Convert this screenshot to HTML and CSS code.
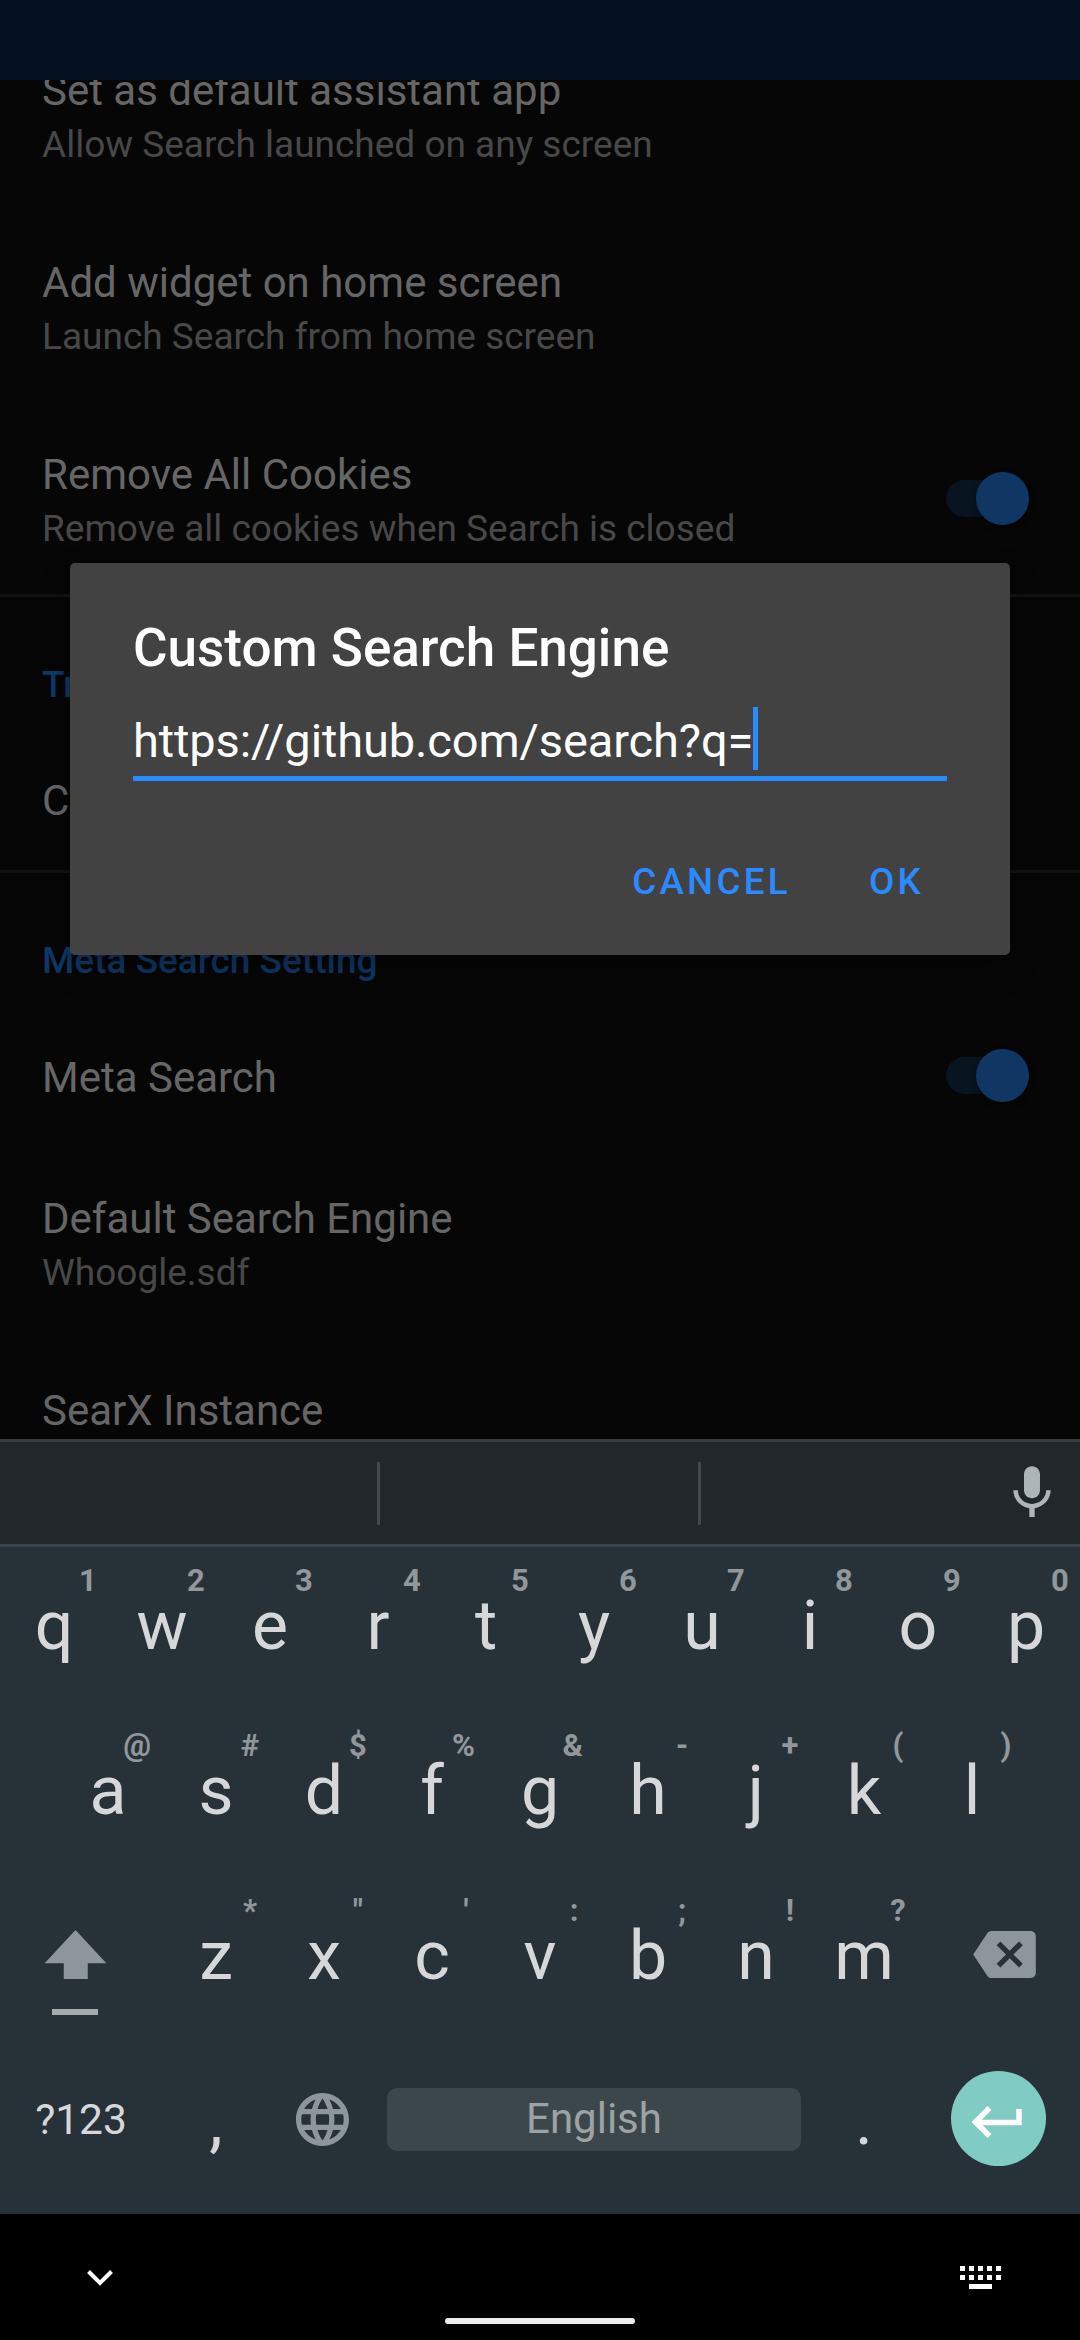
FILE: index.html
```
<!DOCTYPE html>
<html lang="en">
<head>
<meta charset="utf-8">
<title>Settings</title>
<link rel="stylesheet" href="styles.css">
</head>
<body>
<div class="screen">
  <header class="status-bar"></header>
  <main class="settings">
    <section class="group first">
      <div class="row"><div class="label"><div class="title">Set as default assistant app</div><div class="summary">Allow Search launched on any screen</div></div></div>
      <div class="row"><div class="label"><div class="title">Add widget on home screen</div><div class="summary">Launch Search from home screen</div></div></div>
      <div class="row"><div class="label"><div class="title">Remove All Cookies</div><div class="summary">Remove all cookies when Search is closed</div></div><div class="switch"><span class="thumb"></span></div></div>
    </section>
    <section class="group">
      <h2 class="category">Tr</h2>
      <div class="row single"><div class="label"><div class="title">C</div></div></div>
    </section>
    <section class="group">
      <h2 class="category">Meta Search Setting</h2>
      <div class="row single meta"><div class="label"><div class="title">Meta Search</div></div><div class="switch"><span class="thumb"></span></div></div>
      <div class="row"><div class="label"><div class="title">Default Search Engine</div><div class="summary">Whoogle.sdf</div></div></div>
      <div class="row"><div class="label"><div class="title">SearX Instance</div><div class="summary">&nbsp;</div></div></div>
    </section>
  </main>

  <section class="keyboard">
    <div class="suggestions">
      <span class="slot slot-a"></span><span class="slot slot-b"></span>
      <svg class="mic" viewBox="0 0 24 24"><path d="M12 14c1.66 0 2.99-1.34 2.99-3L15 5c0-1.66-1.34-3-3-3S9 3.34 9 5v6c0 1.66 1.34 3 3 3zm5.3-3c0 3-2.54 5.1-5.3 5.1S6.7 14 6.7 11H5c0 3.41 2.72 6.23 6 6.72V21h2v-3.28c3.28-.48 6-3.3 6-6.72h-1.7z"/></svg>
    </div>
    <div class="keys">
      <div class="key">q<span class="hint">1</span></div><div class="key">w<span class="hint">2</span></div><div class="key">e<span class="hint">3</span></div><div class="key">r<span class="hint">4</span></div><div class="key">t<span class="hint">5</span></div><div class="key">y<span class="hint">6</span></div><div class="key">u<span class="hint">7</span></div><div class="key">i<span class="hint">8</span></div><div class="key">o<span class="hint">9</span></div><div class="key">p<span class="hint">0</span></div>
    </div>
    <div class="keys">
      <div class="key">a<span class="hint">@</span></div><div class="key">s<span class="hint">#</span></div><div class="key">d<span class="hint">$</span></div><div class="key">f<span class="hint">%</span></div><div class="key">g<span class="hint">&amp;</span></div><div class="key">h<span class="hint">-</span></div><div class="key">j<span class="hint">+</span></div><div class="key">k<span class="hint">(</span></div><div class="key">l<span class="hint">)</span></div>
    </div>
    <div class="keys">
      <div class="key wide shift">
        <svg class="shift-arrow" viewBox="0 0 63 50"><path d="M31.500 0L63 34H44V50H19.500V34H0z"/></svg>
        <span class="shift-line"></span>
      </div>
      <div class="key">z<span class="hint">*</span></div><div class="key">x<span class="hint">"</span></div><div class="key">c<span class="hint">'</span></div><div class="key">v<span class="hint">:</span></div><div class="key">b<span class="hint">;</span></div><div class="key">n<span class="hint">!</span></div><div class="key">m<span class="hint">?</span></div>
      <div class="key wide delete">
        <svg class="backspace" viewBox="0 3 24 18"><path d="M22 3H7c-.69 0-1.23.35-1.59.88L0 12l5.410 8.110c.36.53.9.89 1.590.89h15c1.100 0 2-.9 2-2V5c0-1.100-.9-2-2-2zm-3 12.590L17.590 17 14 13.410 10.410 17 9 15.590 12.590 12 9 8.410 10.410 7 14 10.590 17.590 7 19 8.410 15.410 12 19 15.590z"/></svg>
      </div>
    </div>
    <div class="keys last">
      <div class="key wide symbols">?123</div>
      <div class="key comma">,</div>
      <div class="key globe-key"><svg class="globe" viewBox="2 2 20 20"><path d="M11.990 2C6.470 2 2 6.480 2 12s4.470 10 9.990 10C17.520 22 22 17.520 22 12S17.520 2 11.990 2zm6.930 6h-2.950c-.32-1.250-.78-2.450-1.380-3.560 1.840.63 3.370 1.910 4.330 3.560zM12 4.040c.83 1.200 1.480 2.530 1.910 3.960h-3.820c.43-1.430 1.080-2.760 1.910-3.960zM4.260 14C4.100 13.360 4 12.690 4 12s.1-1.360.26-2h3.380c-.08.66-.14 1.320-.14 2 0 .68.06 1.340.14 2H4.260zm.82 2h2.950c.32 1.250.78 2.450 1.380 3.560-1.840-.63-3.370-1.900-4.330-3.560zm2.950-8H5.080c.96-1.660 2.490-2.930 4.330-3.560C8.810 5.550 8.350 6.750 8.030 8zM12 19.960c-.83-1.200-1.480-2.530-1.910-3.960h3.820c-.43 1.430-1.080 2.760-1.910 3.960zM14.340 14H9.660c-.09-.66-.16-1.320-.16-2 0-.68.07-1.350.16-2h4.680c.09.65.16 1.320.16 2 0 .68-.07 1.340-.16 2zm.25 5.560c.6-1.110 1.060-2.310 1.380-3.560h2.950c-.96 1.650-2.490 2.930-4.330 3.560zM16.360 14c.08-.66.14-1.320.14-2 0-.68-.06-1.340-.14-2h3.380c.16.64.26 1.310.26 2s-.1 1.360-.26 2h-3.380z"/></svg></div>
      <div class="space">English</div>
      <div class="key period">.</div>
      <div class="key wide enter-key"><div class="enter"><svg class="enter-icon" viewBox="0 0 50 32"><path d="M47 3V16.500H4M17.500 2L3.500 16L17.500 30"/></svg></div></div>
    </div>
  </section>

  <footer class="nav-bar">
    <svg class="chevron" viewBox="0 0 26 16"><path d="M1.500 1.500L13 13L24.500 1.500"/></svg>
    <span class="home"></span>
    <svg class="ime" viewBox="0 0 41 23"><path d="M0 0h5v5H0zM9 0h5v5H9zM18 0h5v5H18zM27 0h5v5H27zM36 0h5v5H36zM0 9h5v5H0zM9 9h5v5H9zM18 9h5v5H18zM27 9h5v5H27zM36 9h5v5H36zM9 18h23v5H9z"/></svg>
  </footer>

  <div class="dialog">
    <h1 class="dialog-title">Custom Search Engine</h1>
    <div class="field"><span>https://github.com/search?q=</span><span class="cursor"></span></div>
    <div class="actions"><span>CANCEL</span><span>OK</span></div>
  </div>
</div>
</body>
</html>
```
FILE: styles.css
```
* { box-sizing: border-box; }
body { margin: 0; background: #000; font-family: Roboto, "Liberation Sans", sans-serif; }
h1, h2 { margin: 0; }
svg { display: block; }

.screen { position: relative; width: 1080px; height: 2340px; display: flex; flex-direction: column; overflow: hidden; }
.status-bar { height: 80px; flex: none; background: #051120; }

/* Settings list, dimmed behind the dialog */
.settings { height: 1359px; flex: none; overflow: hidden; background: #060606; }
.group { border-top: 3px solid #121212; }
.group.first { border-top: 0; margin-top: -60px; height: 574px; }
.row { height: 192px; padding: 0 51px 0 42px; display: flex; align-items: center; justify-content: space-between; }
.label { display: flex; flex-direction: column; gap: 6px; }
.title { font-size: 42px; line-height: 50px; color: #666; white-space: nowrap; }
.summary { font-size: 37px; line-height: 45px; color: #484848; white-space: nowrap; }
.row.single { height: 142px; }
.row.single .title { padding-top: 3px; }
.row.meta { height: 144px; }
.category { height: 131px; padding: 66px 42px 0; font-size: 37px; line-height: 44px; font-weight: 500; color: #0f3866; }
.switch { width: 83px; height: 53px; margin-bottom: 3px; display: flex; align-items: center; }
.meta .switch { margin-bottom: 1px; }
.switch::before { content: ""; width: 60px; height: 37px; border-radius: 19px; background: #081420; }
.thumb { width: 53px; height: 53px; margin-left: -30px; border-radius: 50%; background: #103764; box-shadow: 0 3px 6px rgba(0, 0, 0, .4); }

/* Keyboard */
.keyboard { height: 775px; flex: none; background: #273238; color: #d6d7d9; }
.suggestions { height: 108px; display: flex; align-items: center; background: #22272b; border-top: 3px solid #373d41; border-bottom: 3px solid #38474a; }
.slot { height: 63px; border-right: 3px solid #44494c; }
.slot-a { width: 380px; }
.slot-b { width: 321px; }
.mic { width: 64px; height: 64px; margin-left: 299px; fill: #adb5b9; }
.keys { height: 165px; display: flex; justify-content: center; }
.keys.last { height: 172px; }
.key { position: relative; width: 108px; padding-top: 39px; text-align: center; font-size: 68px; line-height: 80px; }
.key.wide { width: 162px; }
.hint { position: absolute; top: 16px; right: 11px; min-width: 18px; font-size: 31px; line-height: 36px; font-weight: 700; color: #91979b; }
.shift { padding: 53px 0 0 44px; }
.shift-arrow { width: 63px; height: 49px; fill: #8c969b; }
.shift-line { display: block; width: 46px; height: 6px; margin: 30px 0 0 8px; background: #a6abae; }
.delete { padding: 54px 0 0 55px; }
.backspace { width: 63px; height: 47px; fill: #8c969b; }
.symbols { padding-top: 38px; font-size: 42.5px; }
.globe-key { padding: 51px 0 0 26px; }
.globe { width: 53px; height: 53px; fill: #8c969b; }
.space { width: 414px; height: 63px; margin: 46px 9px 0; border-radius: 10px; background: #3c474c; color: #9da2a5; font-size: 42px; line-height: 62px; text-align: center; }
.enter-key { padding: 29px 0 0 33px; }
.enter { width: 95px; height: 95px; display: flex; align-items: center; justify-content: center; padding-top: 7px; border-radius: 50%; background: #80cbc4; }
.enter-icon { width: 50px; height: 32px; margin-right: 4px; fill: none; stroke: #fff; stroke-width: 5.500; }

/* System navigation */
.nav-bar { height: 126px; display: flex; justify-content: space-between; padding: 52px 79px 0 87px; background: #000; }
.chevron { width: 26px; height: 16px; margin-top: 4px; fill: none; stroke: #fff; stroke-width: 4; }
.home { width: 190px; height: 6px; margin: 52px 0 0 7px; border-radius: 3px; background: #ececec; }
.ime { width: 41px; height: 23px; fill: #fff; }

/* Dialog */
.dialog { position: absolute; left: 70px; top: 563px; width: 940px; height: 392px; padding: 54px 63px 0; border-radius: 5px; background: #424242; box-shadow: 0 14px 30px rgba(0, 0, 0, .3); }
.dialog-title { font-size: 53px; line-height: 62px; font-weight: 500; color: #fff; white-space: nowrap; }
.field { display: flex; height: 74px; margin-top: 28px; border-bottom: 5px solid #2a8aff; font-size: 47px; line-height: 68px; letter-spacing: -.12px; color: #fff; }
.cursor { width: 5px; height: 63px; background: #2a8aff; }
.actions { display: flex; justify-content: flex-end; gap: 78px; margin-top: 79px; padding-right: 23px; font-size: 36.75px; line-height: 44px; font-weight: 500; letter-spacing: 3.280px; color: #2a8aff; }
```
